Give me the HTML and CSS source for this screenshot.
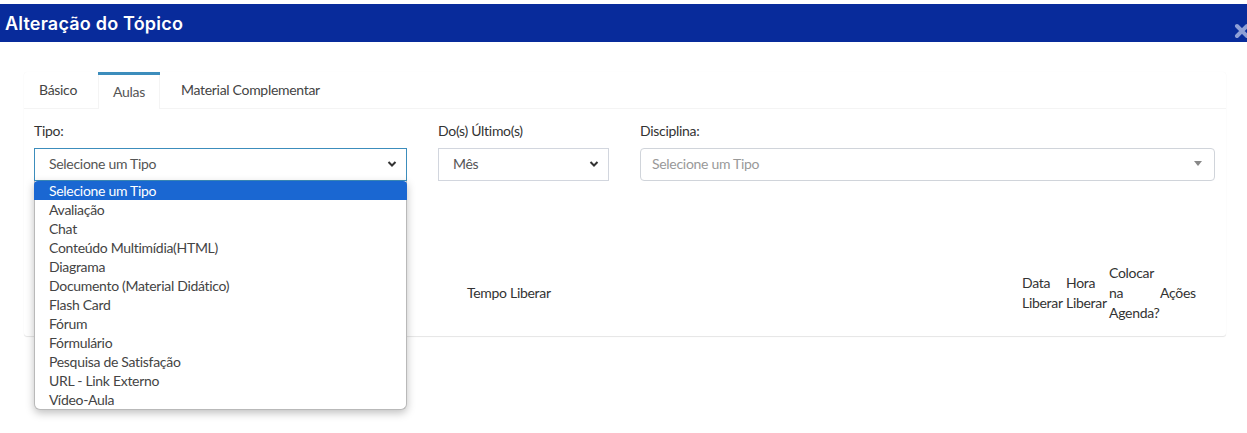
FILE: index.html
```html
<!DOCTYPE html>
<html lang="pt-BR">
<head>
    <meta charset="UTF-8">
    <title>Alteração do Tópico</title>
    <link rel="stylesheet" href="styles.css">
</head>
<body>
    <div class="modal-header">
        <h4 class="modal-title">Alteração do Tópico</h4>
        <span class="close">
            <svg width="16" height="16" viewBox="0 0 16 16"><path d="M3 3 L13 13 M13 3 L3 13" stroke="currentColor" stroke-width="4" stroke-linecap="round"/></svg>
        </span>
    </div>

    <div class="modal-body">
        <div class="nav-tabs-custom">
            <ul class="nav-tabs">
                <li><a>Básico</a></li>
                <li class="active"><a>Aulas</a></li>
                <li><a>Material Complementar</a></li>
            </ul>

            <div class="tab-content">
                <!-- filtros -->
                <div class="filters">
                    <div class="field field-tipo">
                        <label>Tipo:</label>
                        <div class="select focused">
                            <span>Selecione um Tipo</span>
                            <svg class="chevron" width="10" height="8" viewBox="0 0 10 8"><path d="M1.5 2 L5 5.5 L8.5 2" fill="none" stroke="#333" stroke-width="2"/></svg>
                        </div>
                        <ul class="select-popup">
                            <li class="selected">Selecione um Tipo</li>
                            <li>Avaliação</li>
                            <li>Chat</li>
                            <li>Conteúdo Multimídia(HTML)</li>
                            <li>Diagrama</li>
                            <li>Documento (Material Didático)</li>
                            <li>Flash Card</li>
                            <li>Fórum</li>
                            <li>Fórmulário</li>
                            <li>Pesquisa de Satisfação</li>
                            <li>URL - Link Externo</li>
                            <li>Vídeo-Aula</li>
                        </ul>
                    </div>
                    <div class="field field-ultimo">
                        <label>Do(s) Último(s)</label>
                        <div class="select">
                            <span>Mês</span>
                            <svg class="chevron" width="10" height="8" viewBox="0 0 10 8"><path d="M1.5 2 L5 5.5 L8.5 2" fill="none" stroke="#333" stroke-width="2"/></svg>
                        </div>
                    </div>
                    <div class="field field-disciplina">
                        <label>Disciplina:</label>
                        <div class="select select2">
                            <span class="placeholder">Selecione um Tipo</span>
                            <span class="caret"></span>
                        </div>
                    </div>
                </div>

                <!-- tabela de aulas -->
                <table class="table">
                    <thead>
                        <tr>
                            <th class="col-empty"></th>
                            <th class="col-tempo">Tempo Liberar</th>
                            <th class="col-data">Data Liberar</th>
                            <th class="col-hora">Hora Liberar</th>
                            <th class="col-agenda">Colocar na Agenda?</th>
                            <th class="col-acoes">Ações</th>
                        </tr>
                    </thead>
                </table>
            </div>
        </div>
    </div>
</body>
</html>
```

FILE: styles.css
```css
/* base */
html {
    height: 100%;
}

body {
    margin: 0;
    padding-top: 4px;
    min-height: 429px;
    background: #fff;
    font-family: "Lato", "Liberation Sans", sans-serif;
    font-size: 14px;
    letter-spacing: -0.3px;
    color: #333;
}

/* cabeçalho do modal */
.modal-header {
    position: relative;
    height: 38px;
    background: #082b9b;
    display: flex;
    align-items: center;
    padding-left: 5px;
    overflow: hidden;
}

.modal-title {
    margin: 0;
    font-family: "Inter", "Open Sans", sans-serif;
    font-weight: 600;
    font-size: 18px;
    color: #fff;
    letter-spacing: 0.2px;
}

.close {
    position: absolute;
    right: -3px;
    top: 19px;
    color: #8e9fd6;
    line-height: 0;
}

/* corpo */
.modal-body {
    padding: 30px 21px 0 24px;
}

.nav-tabs-custom {
    background: #fff;
    border-radius: 3px;
    box-shadow: 0 1px 1px rgba(0, 0, 0, 0.1), 0 0 1px rgba(0, 0, 0, 0.06);
}

.nav-tabs {
    display: flex;
    margin: 0;
    padding: 0;
    list-style: none;
    border-bottom: 1px solid #f4f4f4;
}

.nav-tabs li {
    border-top: 3px solid transparent;
    margin-bottom: -1px;
    margin-right: 5px;
}

.nav-tabs li a {
    display: block;
    padding: 6px 15px 11px;
    line-height: 17px;
    color: #444;
    border-left: 1px solid transparent;
    border-right: 1px solid transparent;
}

.nav-tabs li.active {
    border-top-color: #3c8dbc;
}

.nav-tabs li.active a {
    padding: 8px 14px 9px;
    background: #fff;
    color: #555;
    border-left-color: #f4f4f4;
    border-right-color: #f4f4f4;
}

.nav-tabs li:first-child a {
    border-left: 0;
}

.tab-content {
    padding: 12px 10px 11px;
}

/* filtros */
.filters {
    display: flex;
    gap: 31px;
}

.field {
    position: relative;
}

.field-tipo { width: 373px; }
.field-ultimo { width: 171px; }
.field-disciplina { width: 575px; }

.field label {
    display: block;
    line-height: 20px;
    margin-bottom: 7px;
    color: #333;
}

.select {
    box-sizing: border-box;
    height: 33px;
    border: 1px solid #d2d6de;
    display: flex;
    align-items: center;
    justify-content: space-between;
    padding: 0 9px 2px 14px;
    color: #555;
    background: #fff;
}

.select.focused {
    border-color: #3c8dbc;
}

.select2 {
    border-color: #d0d4da;
    border-radius: 4px;
    padding: 0 12px 2px 11px;
}

.select2 .placeholder {
    color: #999;
}

.select2 .caret {
    width: 0;
    height: 0;
    border-left: 4px solid transparent;
    border-right: 4px solid transparent;
    border-top: 5px solid #888;
}

/* lista aberta do select */
.select-popup {
    position: absolute;
    left: 0;
    top: 60px;
    width: 373px;
    box-sizing: border-box;
    margin: 0;
    padding: 0;
    list-style: none;
    background: #fff;
    border: 1px solid #b9b9b9;
    border-top: 0;
    border-radius: 0 0 6px 6px;
    box-shadow: 0 3px 8px rgba(0, 0, 0, 0.25);
    z-index: 10;
}

.select-popup li {
    line-height: 19px;
    padding-left: 14px;
    color: #444;
}

.select-popup li.selected {
    background: #1a67d2;
    color: #fff;
    margin: 0 -1px;
    padding-left: 15px;
    border-radius: 4px 4px 0 0;
}

/* tabela */
.table {
    margin-top: 80px;
    width: 1181px;
    border-collapse: collapse;
    table-layout: fixed;
}

.table th {
    font-weight: normal;
    text-align: left;
    padding: 2px 0;
    line-height: 20px;
    color: #333;
}

.col-empty { width: 433px; }
.col-tempo { width: 555px; }
.col-data { width: 44px; }
.col-hora { width: 43px; }
.col-agenda { width: 51px; }
.col-acoes { width: 55px; }
```
